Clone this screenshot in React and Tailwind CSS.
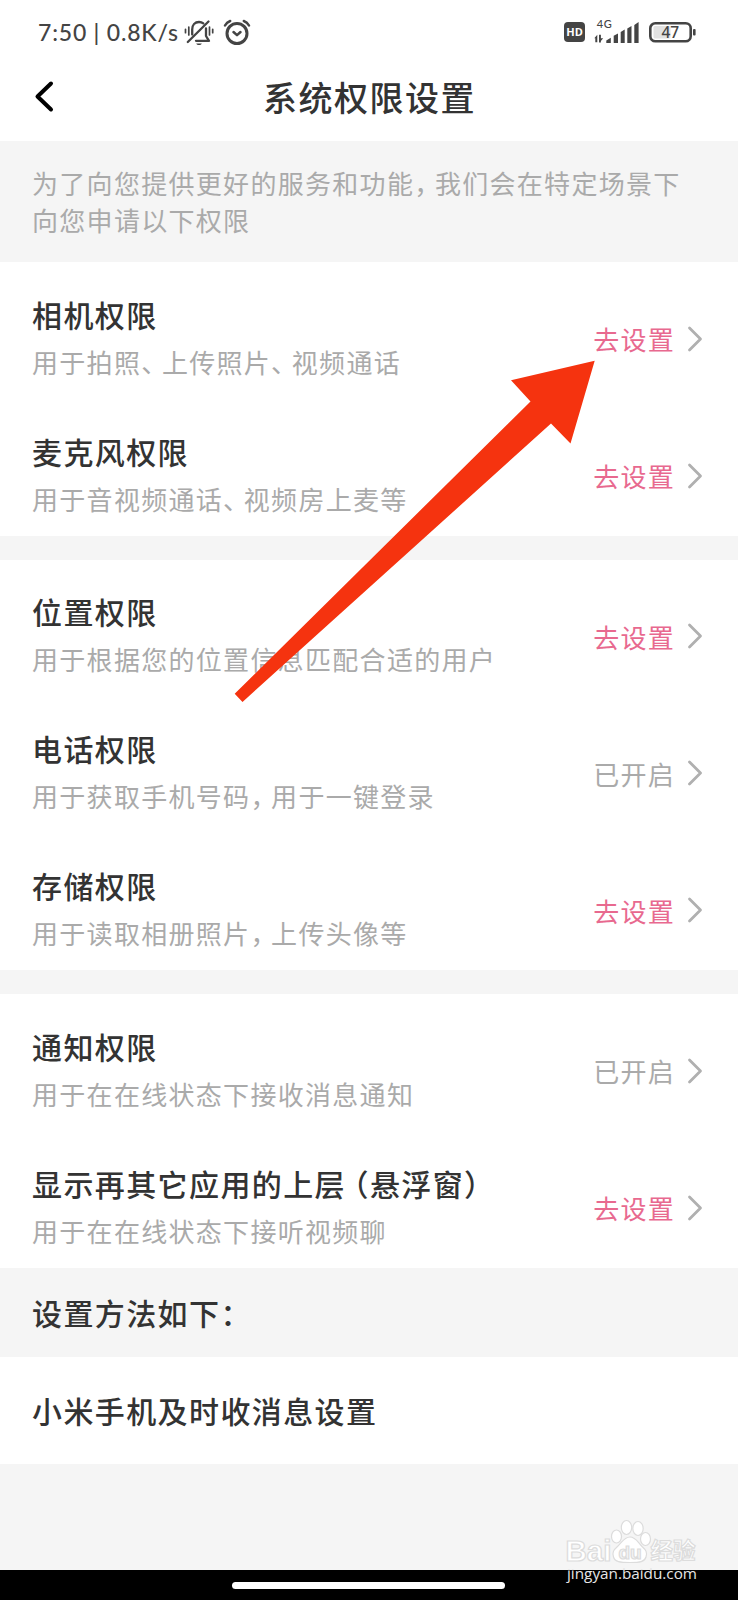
import { Fragment } from "react";

const sections = [
  [
    { title: "相机权限", desc: "用于拍照、上传照片、视频通话", enabled: false },
    { title: "麦克风权限", desc: "用于音视频通话、视频房上麦等", enabled: false },
  ],
  [
    { title: "位置权限", desc: "用于根据您的位置信息匹配合适的用户", enabled: false },
    { title: "电话权限", desc: "用于获取手机号码，用于一键登录", enabled: true },
    { title: "存储权限", desc: "用于读取相册照片，上传头像等", enabled: false },
  ],
  [
    { title: "通知权限", desc: "用于在在线状态下接收消息通知", enabled: true },
    { title: "显示再其它应用的上层（悬浮窗）", desc: "用于在在线状态下接听视频聊", enabled: false },
  ],
];

// Full-width punctuation is set tighter than the characters around it
const Tight = ({ text }) =>
  text.split(/([，、（])/).map((part, i) => {
    if (part === "，" || part === "、") {
      return <span key={i} className="mr-[6.4px] [font-feature-settings:'halt']">{part}</span>;
    }
    if (part === "（") {
      return <span key={i} className="ml-[7.5px] [font-feature-settings:'halt']">{part}</span>;
    }
    return <Fragment key={i}>{part}</Fragment>;
  });

const BellOffIcon = () => (
  <svg className="w-[30px] h-[27px]" viewBox="0 0 30 27" fill="none" stroke="#444" strokeWidth="2.300" strokeLinecap="round" strokeLinejoin="round">
    <path d="M8.200 15.500V10.500C8.200 6 11 3 15 3c1.800 0 3.200.5 4.300 1.400" />
    <path d="M22 9.500V17l3 4.800H12" />
    <path d="M24.500 2.500 3.800 23" strokeWidth="2.300" />
    <path d="M12.200 24.500h5.600c-.6 1-1.500 1.500-2.800 1.500s-2.200-.5-2.800-1.500z" fill="#444" stroke="none" />
    <path d="M4.800 8v8M1.500 10.300v3.400M25.500 8v8M28.700 10.300v3.400" strokeWidth="1.700" />
  </svg>
);

const AlarmIcon = () => (
  <svg className="w-[28px] h-[27px]" viewBox="0 0 28 27" fill="none" stroke="#444" strokeWidth="3" strokeLinecap="round" strokeLinejoin="round">
    <circle cx="14" cy="14.500" r="10" />
    <path d="M2 6.500C3.200 4.300 5 2.800 7.200 2M26 6.500C24.800 4.300 23 2.800 20.800 2" strokeWidth="2.500" />
    <path d="m10.500 13 3.500 3.200 3.500-3.200" strokeWidth="2.500" />
  </svg>
);

const SignalIcon = () => (
  <svg className="w-[48px] h-[28px]" viewBox="0 -4 48 28" fill="#444">
    <text x="3.800" y="8.300" fontSize="11" fontFamily="Lato, sans-serif" fontWeight="500" textLength="15">4G</text>
    <path d="M0 18.300h1.300l3-3.600v7.600H2.300v-4zM6 14.700h1.900v3.600h2.300L7.900 21v1.500H6z" />
    <path d="M13.300 23v-2.500l4.500-2.700V23zM20.700 23v-7.300l4.300-2.200V23zM27.700 23V12l4-2.500V23zM34.300 23V8.500l4.200-2.500V23zM41.300 23V5l4.300-3v21z" />
  </svg>
);

const BatteryIcon = () => (
  <svg className="w-[47px] h-[21px]" viewBox="0 0 47 21">
    <rect x="1.300" y="1.300" width="40.400" height="18" rx="5" fill="none" stroke="#444" strokeWidth="2.600" />
    <rect x="4.500" y="4" width="17" height="12.600" rx="1.500" fill="#e2e2e2" />
    <rect x="44" y="7" width="2.600" height="6.500" rx="1" fill="#444" />
    <text x="21.300" y="16" fontSize="15.500" textAnchor="middle" fontFamily="Noto Sans, sans-serif" fontWeight="500" fill="#444">47</text>
  </svg>
);

const ChevronRight = () => (
  <svg className="w-[16px] h-[26px]" viewBox="0 0 16 26" fill="none" stroke="#b0b0b0" strokeWidth="2.800" strokeLinecap="round" strokeLinejoin="round">
    <path d="M2.500 2 13.500 13 2.500 24" />
  </svg>
);

const PermissionRow = ({ title, desc, enabled }) => (
  <div className="flex h-[136.8px] items-center justify-between pt-[32px] pr-[35px] pb-[17px] pl-8">
    <div className="-mt-[2px] whitespace-nowrap">
      <h2 className="h-10 text-[30px] leading-10 font-medium tracking-[1.4px] text-[#333]">
        <Tight text={title} />
      </h2>
      <p className="mt-2.5 h-9 text-[26px] leading-9 tracking-[1.3px] text-[#aaa]">
        <Tight text={desc} />
      </p>
    </div>
    <div className="mt-[2px] flex items-center gap-[12px]">
      <span className={enabled ? "text-[26px] tracking-[1.25px] text-[#aaa]" : "text-[26px] tracking-[1.25px] text-[#e8698f]"}>
        {enabled ? "已开启" : "去设置"}
      </span>
      <ChevronRight />
    </div>
  </div>
);

const Watermark = () => (
  <div className="absolute top-[1518px] left-[565px] w-[135px]">
    <svg className="w-[135px] h-[70px]" viewBox="0 0 135 70" fill="#fff" stroke="#dcdcdc" strokeWidth="1.200">
      <text x="0.500" y="42.500" fontSize="29" textLength="46" lengthAdjust="spacingAndGlyphs" fontFamily="Liberation Sans, sans-serif" fontWeight="700">Bai</text>
      <ellipse cx="51.500" cy="18.500" rx="5" ry="6.500" />
      <ellipse cx="61.500" cy="9.500" rx="5.200" ry="7" />
      <ellipse cx="73" cy="10.500" rx="5.200" ry="7" />
      <ellipse cx="80.500" cy="21" rx="5" ry="6.500" />
      <path d="M65 19c6 0 8 6 12 9.500 4 3.500 5.500 6 4 10.500-1.500 5-6 5.500-16 5.500s-15-.5-16.500-5.500c-1.500-4.500 0-7 4-10.500S59 19 65 19z" />
      <text x="53.500" y="40.500" fontSize="19" textLength="23" fontFamily="Liberation Sans, sans-serif" fontWeight="700" fill="#f5f5f5">du</text>
      <text x="85.500" y="41" fontSize="22.500" fontFamily="Noto Sans CJK SC, sans-serif" fontWeight="700">经验</text>
      <text x="2" y="61" fontSize="14" textLength="130" lengthAdjust="spacingAndGlyphs" fontFamily="Open Sans, sans-serif" fontWeight="500" fill="#e6e6e6" stroke="none">jingyan.baidu.com</text>
    </svg>
  </div>
);

const App = () => {
  return (
    <div className="relative flex h-[1600px] w-[738px] flex-col overflow-hidden bg-[#f5f5f5] font-['Noto_Sans_CJK_SC',sans-serif]">
      {/* Status bar */}
      <div className="flex h-[64px] items-center justify-between bg-white pr-[42px] pl-[38px]">
        <div className="flex items-center">
          <span className="w-[146px] whitespace-nowrap font-['Lato',sans-serif] text-[23px] font-medium tracking-[0.8px] text-[#444]">7:50 | 0.8K/s</span>
          <BellOffIcon />
          <span className="ml-[9px]"><AlarmIcon /></span>
        </div>
        <div className="flex items-center">
          <span className="flex h-5 w-[21px] items-center justify-center rounded-[4px] bg-[#444] font-['Open_Sans',sans-serif] text-[11px] font-bold text-white">HD</span>
          <span className="-mt-1 mr-[8px] ml-[8px]"><SignalIcon /></span>
          <BatteryIcon />
        </div>
      </div>

      {/* Header */}
      <div className="flex h-[77px] items-start bg-white pt-[9px] pl-[33px]">
        <svg className="mt-[7px] h-[34px] w-[22px]" viewBox="0 0 22 34" fill="none" stroke="#000" strokeWidth="4" strokeLinecap="round" strokeLinejoin="round">
          <path d="M18 3.500 4.500 16.500l13.500 13" />
        </svg>
        <h1 className="ml-[208px] text-[34px] leading-[48px] font-medium tracking-[1.5px] text-[#333]">系统权限设置</h1>
      </div>

      {/* Notice */}
      <div className="h-[121px] pt-[24px] pl-8 text-[26px] leading-[36.700px] tracking-[1.300px] whitespace-nowrap text-[#aaa]">
        <p><Tight text="为了向您提供更好的服务和功能，我们会在特定场景下" /></p>
        <p>向您申请以下权限</p>
      </div>

      <div className="flex flex-col gap-6">
        {sections.map((rows, index) => (
          <div key={index} className="bg-white">
            {rows.map((row) => (
              <PermissionRow key={row.title} {...row} />
            ))}
          </div>
        ))}
      </div>

      <div className="flex h-[89.4px] items-center pl-8 text-[30px] font-medium tracking-[1.4px] text-[#333]">设置方法如下：</div>
      <div className="flex h-[107px] items-center bg-white pl-8 text-[30px] font-medium tracking-[1.4px] text-[#333]">小米手机及时收消息设置</div>

      {/* Gesture bar */}
      <div className="mt-auto flex h-[30px] items-center justify-center bg-black pr-px">
        <div className="h-[7px] w-[273px] rounded-full bg-white" />
      </div>

      <svg className="absolute top-[360px] left-[234px] h-[343px] w-[362px]" viewBox="234 360 362 343">
        <path d="M594.700 360.700 511 380.300l19.500 21.200L234.700 693.700l7.800 8.300L551 423.500l19.500 20z" fill="#f5330f" />
      </svg>

      <Watermark />
    </div>
  );
};

export default App;
